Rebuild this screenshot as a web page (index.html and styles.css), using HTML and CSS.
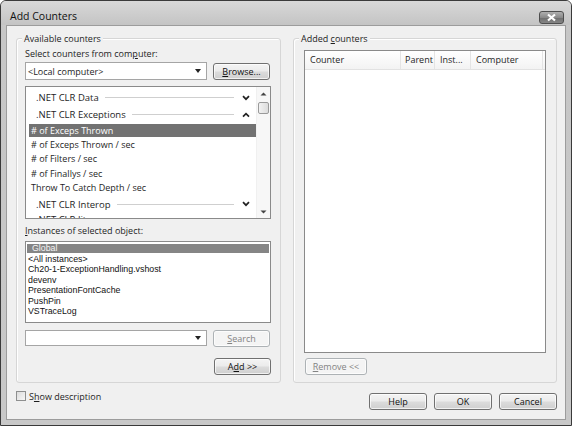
FILE: index.html
```html
<!DOCTYPE html>
<html>
<head>
<meta charset="utf-8">
<link rel="stylesheet" href="styles.css">
</head>
<body>
<div class="window">
  <div class="titlebar">
    <span class="title">Add Counters</span>
    <div class="close"><svg width="11" height="9" viewBox="0 0 11 9"><path d="M2 1.5 L9 7.5 M9 1.5 L2 7.5" stroke="#fff" stroke-width="2.2" fill="none"/></svg></div>
  </div>
  <div class="client">
    <div class="groups">
      <div class="group gleft">
        <div class="legend">Available counters</div>
        <div class="label">Select counters from com<u>p</u>uter:</div>
        <div class="row">
          <div class="combo"><span>&lt;Local computer&gt;</span><span class="drop"></span></div>
          <div class="btn wbtn"><u>B</u>rowse...</div>
        </div>
        <div class="list counters">
          <div class="items">
            <div class="cat"><span class="ctext">.NET CLR Data</span><span class="rule"></span><svg class="chev" width="8" height="6" viewBox="0 0 8 6"><path d="M1 1.2 L4 4.2 L7 1.2" stroke="#222" stroke-width="1.7" fill="none"/></svg></div>
            <div class="cat"><span class="ctext">.NET CLR Exceptions</span><span class="rule"></span><svg class="chev" width="8" height="6" viewBox="0 0 8 6"><path d="M1 4.6 L4 1.6 L7 4.6" stroke="#222" stroke-width="1.7" fill="none"/></svg></div>
            <div class="item sel">&#35; of Exceps Thrown</div>
            <div class="item">&#35; of Exceps Thrown / sec</div>
            <div class="item">&#35; of Filters / sec</div>
            <div class="item">&#35; of Finallys / sec</div>
            <div class="item">Throw To Catch Depth / sec</div>
            <div class="cat"><span class="ctext">.NET CLR Interop</span><span class="rule"></span><svg class="chev" width="8" height="6" viewBox="0 0 8 6"><path d="M1 1.2 L4 4.2 L7 1.2" stroke="#222" stroke-width="1.7" fill="none"/></svg></div>
            <div class="cat last"><span class="ctext">.NET CLR Jit</span><span class="rule"></span></div>
          </div>
          <div class="vscroll">
            <svg class="arr" width="7" height="4" viewBox="0 0 7 4"><path d="M0.5 3.5 L3.5 0.5 L6.5 3.5 Z" fill="#444"/></svg>
            <div class="thumb"></div>
            <div class="track"></div>
            <svg class="arr" width="7" height="4" viewBox="0 0 7 4"><path d="M0.5 0.5 L3.5 3.5 L6.5 0.5 Z" fill="#444"/></svg>
          </div>
        </div>
        <div class="label lbl2"><u>I</u>nstances of selected object:</div>
        <div class="list instances">
          <div class="inst glob"><span>Global</span></div>
          <div class="inst">&lt;All instances&gt;</div>
          <div class="inst">Ch20-1-ExceptionHandling.vshost</div>
          <div class="inst">devenv</div>
          <div class="inst">PresentationFontCache</div>
          <div class="inst">PushPin</div>
          <div class="inst">VSTraceLog</div>
        </div>
        <div class="row row2">
          <div class="combo short"><span></span><span class="drop"></span></div>
          <div class="btn wbtn disabled"><u>S</u>earch</div>
        </div>
        <div class="row row3">
          <div class="btn wbtn">A<u>d</u>d &gt;&gt;</div>
        </div>
      </div>
      <div class="group gright">
        <div class="legend">Added <u>c</u>ounters</div>
        <div class="listview">
          <div class="lvhead">
            <div class="col c1">Counter</div>
            <div class="col c2">Parent</div>
            <div class="col c3">Inst...</div>
            <div class="col c4">Computer</div>
          </div>
        </div>
        <div class="btn rbtn disabled"><u>R</u>emove &lt;&lt;</div>
      </div>
    </div>
    <div class="bottom">
      <div class="check"><span class="box"></span><span>S<u>h</u>ow description</span></div>
      <div class="btns">
        <div class="btn dbtn">Help</div>
        <div class="btn dbtn">OK</div>
        <div class="btn dbtn">Cancel</div>
      </div>
    </div>
  </div>
</div>
</body>
</html>
```

FILE: styles.css
```css
* { box-sizing: border-box; }
html, body { margin: 0; padding: 0; background: #fff; }
body { font-family: "Open Sans", "Noto Sans", sans-serif; font-size: 9px; color: #1e1e1e; }
u { text-decoration: underline; text-underline-offset: 1px; }

.window {
  width: 572px; height: 426px;
  border: 1px solid #3a3a3a;
  border-radius: 6px 6px 0 0;
  background: linear-gradient(#d2d2d2, #c6c6c6 30px, #c8c8c8);
  padding: 0 5px 5px 5px;
  display: flex; flex-direction: column;
}
.titlebar {
  height: 24px; flex: none;
  display: flex; align-items: center; justify-content: space-between;
  background: linear-gradient(#d8d8d8, #c4c4c4);
  margin: 0 -5px; padding-left: 9px; padding-right: 7px;
  border-radius: 5px 5px 0 0;
}
.title { font-size: 10.5px; color: #111; padding-top: 5px; }
.close {
  width: 25px; height: 13px; margin-top: 8px;
  border: 1px solid #4e4e4e; border-radius: 3px;
  background: linear-gradient(#b0b0b0, #8a8a8a 50%, #6e6e6e 51%, #858585);
  display: flex; align-items: center; justify-content: center;
}
.client {
  flex: 1;
  border: 1px solid #9c9c9c;
  background: #f0f0f0;
  display: flex; flex-direction: column;
  padding: 12px 8px 0 9px;
}
.groups { display: flex; gap: 12px; height: 345px; flex: none; }
.group {
  border: 1px solid #d6d6d6;
  border-radius: 3px;
  box-shadow: inset 1px 1px 0 #fff;
  display: flex; flex-direction: column;
}
.gleft { width: 265px; padding: 0 9px 0 8px; }
.gright { width: 264px; padding: 0 9px 0 10px; }
.legend {
  height: 14px; line-height: 14px; margin-top: -7px; margin-left: -3px;
  align-self: flex-start; padding: 0 2px; background: #f0f0f0;
}
.gright .legend { margin-left: -5px; }
.label { height: 14px; line-height: 14px; margin-top: 1px; }
.lbl2 { margin-top: 5px; }
.row { display: flex; gap: 6px; align-items: flex-start; }
.row { margin-top: 1px; }
.combo {
  width: 182px; height: 18px;
  border: 1px solid #a5a5a5; background: #fff;
  display: flex; align-items: center; justify-content: space-between;
  padding: 0 3px 0 2px;
}
.combo.short { height: 16px; }
.drop { width: 0; height: 0; border-left: 3px solid transparent; border-right: 3px solid transparent; border-top: 4px solid #222; margin-right: 2px; }
.btn {
  height: 17px; border: 1px solid #707070; border-radius: 3px;
  background: linear-gradient(#f4f4f4, #ebebeb 48%, #dcdcdc 52%, #cfcfcf);
  display: flex; align-items: center; justify-content: center;
  box-shadow: inset 0 0 0 1px rgba(255,255,255,0.7);
  color: #111;
}
.wbtn { width: 57px; }
.row .wbtn { margin-top: 1px; height: 17px; }
.btn.disabled { border-color: #adb2b5; background: #f4f4f4; color: #838383; }

.list { border: 1px solid #8a8a8a; background: #fff; }
.counters { margin-top: 6px; height: 133px; display: flex; overflow: hidden; }
.items { flex: 1; padding: 2px 0 0 3px; overflow: hidden; }
.cat { height: 17px; display: flex; align-items: center; padding-left: 7px; padding-right: 6px; flex: none; }
.cat.last { align-items: flex-end; height: 14px; line-height: 14px; }
.ctext { white-space: nowrap; font-size: 9.5px; }
.rule { flex: 1; height: 1px; background: #cfcfcf; margin: 0 8px 0 6px; }
.cat.last .rule { margin-bottom: 6px; }
.chev { flex: none; }
.item { height: 14.5px; line-height: 14.5px; padding-left: 2px; white-space: nowrap; }
.item.sel { background: #727272; color: #fff; height: 13px; line-height: 13px; margin: 1px 0 0.5px; }
.vscroll { width: 14px; flex: none; display: flex; flex-direction: column; align-items: center; padding: 5px 0 4px; background: #f7f7f7; border-left: 1px solid #f0f0f0; }
.arr { flex: none; }
.thumb { width: 11px; height: 12px; margin-top: 6px; border: 1px solid #9a9a9a; border-radius: 2px; background: linear-gradient(90deg, #f2f2f2, #dcdcdc); }
.track { flex: 1; }

.instances { margin-top: 3px; height: 82px; padding: 1px 1px 0 1px; }
.inst { height: 10.4px; line-height: 10.4px; font-size: 8.8px; padding-left: 1px; white-space: nowrap; font-family: "Liberation Sans", sans-serif; color: #111; }
.glob { background: #858585; color: #f4f4f4; padding-left: 5px; height: 9px; line-height: 9px; margin-top: 1px; margin-bottom: 1px; }
.row2 { margin-top: 7px; }
.row2 .wbtn { margin-top: 0; }
.row3 { margin-top: 11px; justify-content: flex-end; }
.row3 .wbtn { margin-top: 0; }

.listview { margin-top: 4px; width: 242px; height: 303px; border: 1px solid #8a8a8a; background: #fff; }
.lvhead { display: flex; height: 19px; background: linear-gradient(#ffffff, #f3f3f3); border-bottom: 1px solid #e2e2e2; }
.col { line-height: 18px; padding-left: 5px; border-right: 1px solid #e4e4e4; }
.c1 { width: 96px; }
.c2 { width: 34px; padding-left: 4px; }
.c3 { width: 36px; }
.c4 { width: 72px; }
.rbtn { width: 62px; margin-top: 5px; margin-left: 1px; }

.bottom { display: flex; justify-content: space-between; }
.check { display: flex; align-items: center; gap: 3px; margin-top: 8px; height: 10px; }
.box { width: 10px; height: 10px; border: 1px solid #8e8f8f; background: linear-gradient(135deg, #dcdcdc, #f6f6f6); }
.btns { display: flex; gap: 7px; margin-top: 10px; }
.dbtn { width: 58px; height: 17px; }
```
